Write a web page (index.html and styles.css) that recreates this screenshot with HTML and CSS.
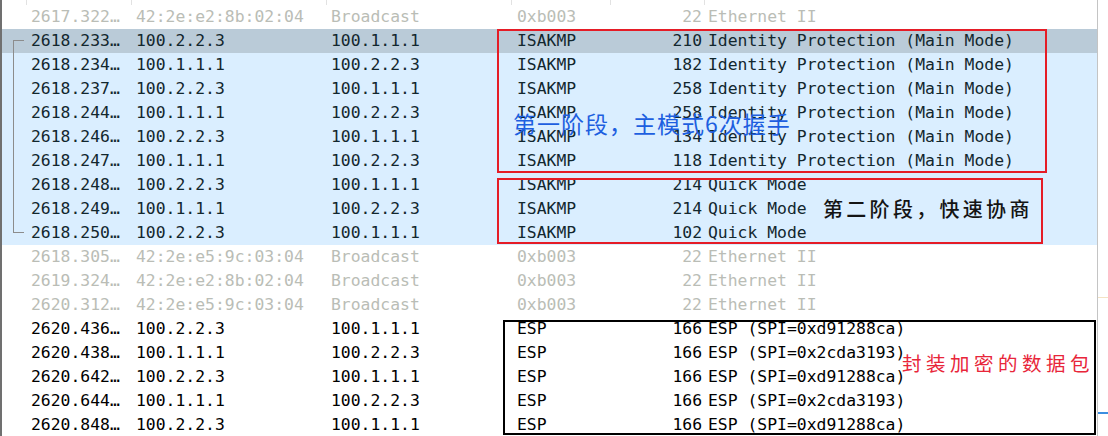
FILE: index.html
```html
<!DOCTYPE html>
<html lang="zh">
<head>
<meta charset="utf-8">
<title>Packet list</title>
<link rel="stylesheet" href="styles.css">
</head>
<body>
<div class="screen">
  <div class="list">
    <div class="header"><span></span><span></span><span></span><span></span><span></span><span></span><span class="last"></span></div>

    <div class="row gray"><span class="c c-no"></span><span class="c c-time">2617.322…</span><span class="c c-src">42:2e:e2:8b:02:04</span><span class="c c-dst">Broadcast</span><span class="c c-proto">0xb003</span><span class="c c-len">22</span><span class="c c-info">Ethernet II</span></div>

    <div class="row udp selected"><span class="c c-no tree-start"></span><span class="c c-time">2618.233…</span><span class="c c-src">100.2.2.3</span><span class="c c-dst">100.1.1.1</span><span class="c c-proto">ISAKMP</span><span class="c c-len">210</span><span class="c c-info">Identity Protection (Main Mode)</span></div>
    <div class="row udp"><span class="c c-no tree-mid"></span><span class="c c-time">2618.234…</span><span class="c c-src">100.1.1.1</span><span class="c c-dst">100.2.2.3</span><span class="c c-proto">ISAKMP</span><span class="c c-len">182</span><span class="c c-info">Identity Protection (Main Mode)</span></div>
    <div class="row udp"><span class="c c-no tree-mid"></span><span class="c c-time">2618.237…</span><span class="c c-src">100.2.2.3</span><span class="c c-dst">100.1.1.1</span><span class="c c-proto">ISAKMP</span><span class="c c-len">258</span><span class="c c-info">Identity Protection (Main Mode)</span></div>
    <div class="row udp"><span class="c c-no tree-mid"></span><span class="c c-time">2618.244…</span><span class="c c-src">100.1.1.1</span><span class="c c-dst">100.2.2.3</span><span class="c c-proto">ISAKMP</span><span class="c c-len">258</span><span class="c c-info">Identity Protection (Main Mode)</span></div>
    <div class="row udp"><span class="c c-no tree-mid"></span><span class="c c-time">2618.246…</span><span class="c c-src">100.2.2.3</span><span class="c c-dst">100.1.1.1</span><span class="c c-proto">ISAKMP</span><span class="c c-len">134</span><span class="c c-info">Identity Protection (Main Mode)</span></div>
    <div class="row udp"><span class="c c-no tree-mid"></span><span class="c c-time">2618.247…</span><span class="c c-src">100.1.1.1</span><span class="c c-dst">100.2.2.3</span><span class="c c-proto">ISAKMP</span><span class="c c-len">118</span><span class="c c-info">Identity Protection (Main Mode)</span></div>
    <div class="row udp"><span class="c c-no tree-mid"></span><span class="c c-time">2618.248…</span><span class="c c-src">100.2.2.3</span><span class="c c-dst">100.1.1.1</span><span class="c c-proto">ISAKMP</span><span class="c c-len">214</span><span class="c c-info">Quick Mode</span></div>
    <div class="row udp"><span class="c c-no tree-mid"></span><span class="c c-time">2618.249…</span><span class="c c-src">100.1.1.1</span><span class="c c-dst">100.2.2.3</span><span class="c c-proto">ISAKMP</span><span class="c c-len">214</span><span class="c c-info">Quick Mode</span></div>
    <div class="row udp"><span class="c c-no tree-end"></span><span class="c c-time">2618.250…</span><span class="c c-src">100.2.2.3</span><span class="c c-dst">100.1.1.1</span><span class="c c-proto">ISAKMP</span><span class="c c-len">102</span><span class="c c-info">Quick Mode</span></div>

    <div class="row gray"><span class="c c-no"></span><span class="c c-time">2618.305…</span><span class="c c-src">42:2e:e5:9c:03:04</span><span class="c c-dst">Broadcast</span><span class="c c-proto">0xb003</span><span class="c c-len">22</span><span class="c c-info">Ethernet II</span></div>
    <div class="row gray"><span class="c c-no"></span><span class="c c-time">2619.324…</span><span class="c c-src">42:2e:e2:8b:02:04</span><span class="c c-dst">Broadcast</span><span class="c c-proto">0xb003</span><span class="c c-len">22</span><span class="c c-info">Ethernet II</span></div>
    <div class="row gray"><span class="c c-no"></span><span class="c c-time">2620.312…</span><span class="c c-src">42:2e:e5:9c:03:04</span><span class="c c-dst">Broadcast</span><span class="c c-proto">0xb003</span><span class="c c-len">22</span><span class="c c-info">Ethernet II</span></div>

    <div class="row esp"><span class="c c-no"></span><span class="c c-time">2620.436…</span><span class="c c-src">100.2.2.3</span><span class="c c-dst">100.1.1.1</span><span class="c c-proto">ESP</span><span class="c c-len">166</span><span class="c c-info">ESP (SPI=0xd91288ca)</span></div>
    <div class="row esp"><span class="c c-no"></span><span class="c c-time">2620.438…</span><span class="c c-src">100.1.1.1</span><span class="c c-dst">100.2.2.3</span><span class="c c-proto">ESP</span><span class="c c-len">166</span><span class="c c-info">ESP (SPI=0x2cda3193)</span></div>
    <div class="row esp"><span class="c c-no"></span><span class="c c-time">2620.642…</span><span class="c c-src">100.2.2.3</span><span class="c c-dst">100.1.1.1</span><span class="c c-proto">ESP</span><span class="c c-len">166</span><span class="c c-info">ESP (SPI=0xd91288ca)</span></div>
    <div class="row esp"><span class="c c-no"></span><span class="c c-time">2620.644…</span><span class="c c-src">100.1.1.1</span><span class="c c-dst">100.2.2.3</span><span class="c c-proto">ESP</span><span class="c c-len">166</span><span class="c c-info">ESP (SPI=0x2cda3193)</span></div>
    <div class="row esp"><span class="c c-no"></span><span class="c c-time">2620.848…</span><span class="c c-src">100.2.2.3</span><span class="c c-dst">100.1.1.1</span><span class="c c-proto">ESP</span><span class="c c-len">166</span><span class="c c-info">ESP (SPI=0xd91288ca)</span></div>
  </div>

  <div class="minimap">
    <span class="mark mark-tan"></span>
    <span class="mark mark-blue"></span>
  </div>

  <div class="box box-phase1"></div>
  <div class="box box-phase2"></div>
  <div class="box box-esp"></div>

  <div class="note note-phase1">第一阶段，主模式6次握手</div>
  <div class="note note-phase2">第二阶段，快速协商</div>
  <div class="note note-esp">封装加密的数据包</div>
</div>
</body>
</html>
```

FILE: styles.css
```css
html, body {
  margin: 0;
  padding: 0;
  background: #ffffff;
}

.screen {
  position: relative;
  display: flex;
  width: 1108px;
  height: 436px;
  overflow: hidden;
  background: #ffffff;
}

.list {
  width: 1098px;
  flex: none;
  box-sizing: border-box;
  border-left: 2px solid #707070;
  border-right: 1px solid #c4c4c4;
  font-family: "DejaVu Sans Mono", "Liberation Mono", monospace;
  font-size: 16.4px;
}

.header,
.row {
  display: grid;
  grid-template-columns: 25px 105px 195px 185px 99px 94px 1fr;
}

.header {
  height: 5px;
}

.header span {
  border-right: 1px solid #e2e2e2;
}

.header .last {
  border-right: none;
}

.row {
  height: 24px;
  line-height: 24px;
  white-space: nowrap;
}

.c {
  overflow: hidden;
  padding-left: 4px;
}

.c-proto {
  padding-left: 5px;
}

.c-len {
  text-align: right;
  padding-left: 0;
  padding-right: 3px;
}

.c-info {
  padding-left: 3px;
}

.row.gray {
  color: #babdb6;
  background: #ffffff;
}

.row.udp {
  color: #12272e;
  background: #daeeff;
}

.row.udp.selected {
  background: #bacbd8;
}

.row.esp {
  color: #000000;
  background: #ffffff;
}

/* related-packet tree marks in the No. column */
.c-no {
  position: relative;
  padding: 0;
}

.tree-start::before,
.tree-mid::before,
.tree-end::before {
  content: "";
  position: absolute;
  left: 11px;
  width: 1px;
  background: #8c8c8c;
}

.tree-start::before {
  top: 11px;
  bottom: 0;
}

.tree-mid::before {
  top: 0;
  bottom: 0;
}

.tree-end::before {
  top: 0;
  height: 12px;
}

.tree-start::after,
.tree-end::after {
  content: "";
  position: absolute;
  left: 11px;
  width: 11px;
  height: 1px;
  background: #8c8c8c;
}

.tree-start::after {
  top: 11px;
}

.tree-end::after {
  top: 11px;
}

/* scrollbar minimap */
.minimap {
  flex: 1;
  display: flex;
  flex-direction: column;
}

.mark {
  display: block;
  height: 1px;
}

.mark-tan {
  margin-top: 297px;
  background: #f3e3c4;
}

.mark-blue {
  margin-top: 114px;
  height: 2px;
  background: #3b8ee0;
}

/* annotation overlays */
.box {
  position: absolute;
  box-sizing: border-box;
}

.box-phase1 {
  left: 497px;
  top: 29px;
  width: 550px;
  height: 144px;
  border: 2px solid #e51c26;
}

.box-phase2 {
  left: 497px;
  top: 178px;
  width: 546px;
  height: 66px;
  border: 2px solid #e51c26;
}

.box-esp {
  left: 503px;
  top: 320px;
  width: 593px;
  height: 115px;
  border: 2.5px solid #000000;
}

.note {
  position: absolute;
  font-family: "Noto Sans CJK SC", sans-serif;
  line-height: 1;
  white-space: nowrap;
}

.note-phase1 {
  left: 513px;
  top: 112px;
  font-size: 23px;
  letter-spacing: 1px;
  color: #1d5fe0;
}

.note-phase2 {
  left: 823px;
  top: 199px;
  font-size: 20px;
  letter-spacing: 3.3px;
  font-weight: 500;
  color: #141414;
}

.note-esp {
  left: 902px;
  top: 353px;
  font-size: 19.5px;
  letter-spacing: 4.5px;
  color: #e8263a;
}
```
